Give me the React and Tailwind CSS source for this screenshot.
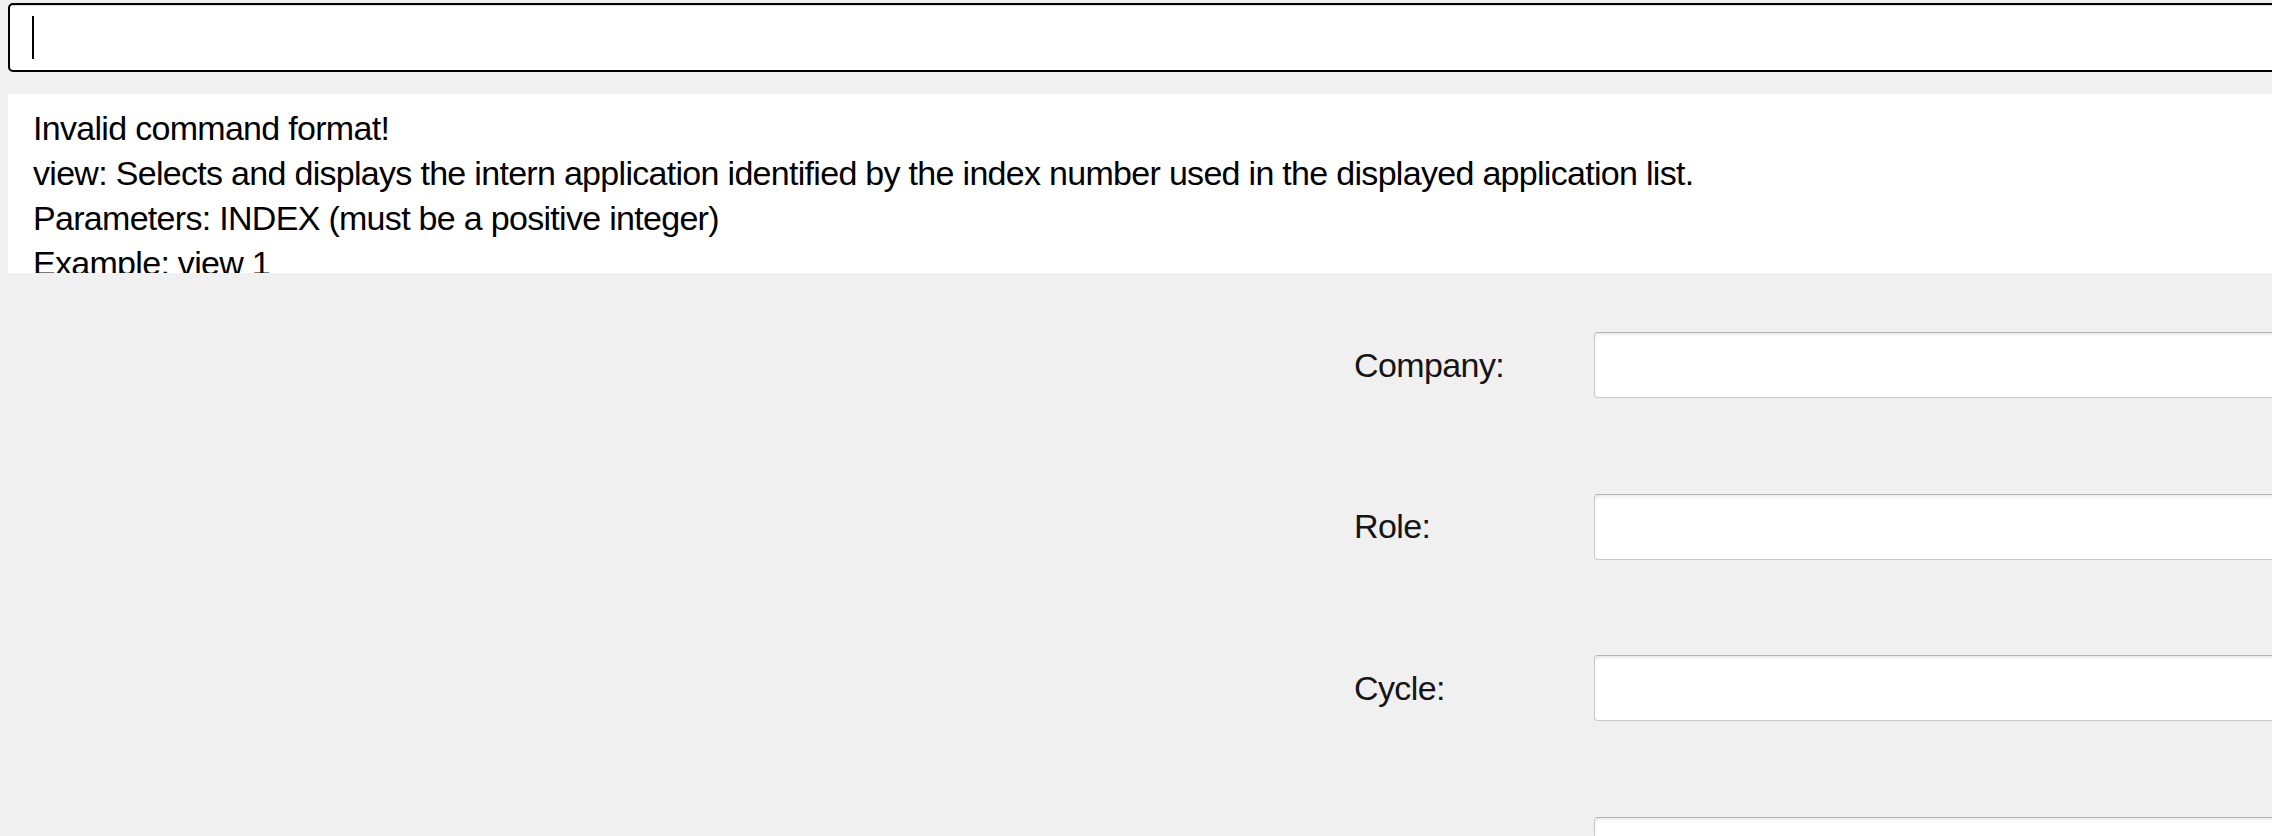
import React from "react";

const resultLines = [
  "Invalid command format!",
  "view: Selects and displays the intern application identified by the index number used in the displayed application list.",
  "Parameters: INDEX (must be a positive integer)",
  "Example: view 1",
];

const fields = ["Company:", "Role:", "Cycle:", ""];

const App = () => {
  return (
    <div className="h-[836px] w-full overflow-hidden bg-[#f0f0f0] font-['Liberation_Sans',Arial,sans-serif] text-black">
      {/* Command box */}
      <div className="pl-2 pt-[3px]">
        <div className="-mr-4 flex h-[69px] items-center rounded-[5px] border-2 border-black bg-white pl-[22px] shadow-[inset_0_1px_0_#d9d9d9]">
          <div className="h-[43px] w-[2px] bg-black"></div>
        </div>
      </div>

      {/* Result display */}
      <div className="ml-2 mt-[22px] h-[179px] overflow-hidden bg-white pl-[25px] pt-[12px] text-[34px] leading-[45px] tracking-[-0.7px]">
        {resultLines.map((line) => (
          <div key={line} className="whitespace-nowrap">
            {line}
          </div>
        ))}
      </div>

      {/* Form */}
      <div className="mt-[59px] flex">
        <div className="w-[1354px] shrink-0"></div>
        <div className="-mr-4 grid flex-1 grid-cols-[240px_1fr] gap-y-[95.5px]">
          {fields.map((label, i) => (
            <React.Fragment key={i}>
              <div className="flex h-[66px] items-center text-[34px] tracking-[-0.6px] text-[#151515]">
                {label}
              </div>
              <div className="h-[66px] rounded-[4px] border border-[#c8c8c8] border-t-[#b4b4b4] bg-white shadow-[inset_0_3px_4px_-2px_rgba(0,0,0,0.12)]"></div>
            </React.Fragment>
          ))}
        </div>
      </div>
    </div>
  );
};

export default App;
